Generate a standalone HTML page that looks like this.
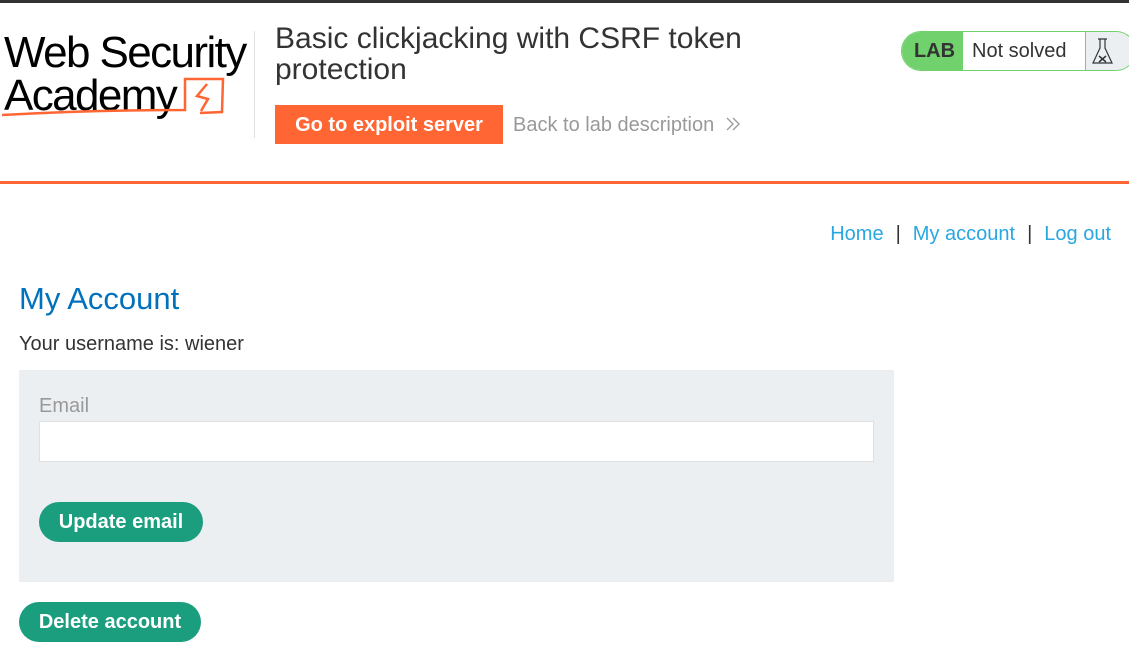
<!DOCTYPE html>
<html><head><meta charset="utf-8"><style>
*{margin:0;padding:0;box-sizing:border-box}
body{width:1129px;height:654px;overflow:hidden;background:#fff;font-family:"Liberation Sans",Arial,sans-serif;position:relative}
.top{position:absolute;left:0;top:0;width:1129px;height:3px;background:#333}
.hdr{position:absolute;left:0;top:181px;width:1129px;height:3px;background:#ff6633}
.logo{position:absolute;left:4px;top:31px;font-size:44px;line-height:43px;letter-spacing:-1.6px;color:#000}
.sep{position:absolute;left:254px;top:31px;width:1px;height:107px;background:#e0e0e0}
h2.t{position:absolute;left:275px;top:23px;font-size:30px;font-weight:normal;line-height:31px;color:#333;width:580px}
.btn{position:absolute;left:275px;top:105px;width:228px;height:39px;background:#ff6633;color:#fff;font-weight:bold;font-size:20px;text-align:center;line-height:40px}
.back{position:absolute;left:513px;top:114px;font-size:20px;color:#999}
.badge{position:absolute;left:901px;top:31px;width:235px;height:40px;border:1px solid #70d16d;border-radius:20px;overflow:hidden;display:flex}
.lab{width:61px;background:#70d16d;font-weight:bold;font-size:20px;color:#333;text-align:center;line-height:39px;padding-left:4px}
.ns{width:123px;font-size:20px;color:#333;padding-left:9px;line-height:39px;border-right:1px solid #70d16d}
.fl{flex:1;background:#ebeff2}
.nav{position:absolute;right:18px;top:223px;font-size:20px;color:#29a7e0}
.nav span{color:#333;margin:0 12px}
h1{position:absolute;left:19px;top:281px;font-size:31px;font-weight:normal;color:#0071bc}
.u{position:absolute;left:19px;top:333px;font-size:20px;color:#333}
.box{position:absolute;left:19px;top:370px;width:875px;height:212px;background:#ebeff2}
.lbl{position:absolute;left:39px;top:395px;font-size:20px;color:#999}
.inp{position:absolute;left:39px;top:421px;width:835px;height:41px;background:#fff;border:1px solid #e0e0e0}
.g{position:absolute;height:40px;border-radius:20px;background:#1a9e7e;color:#fff;font-weight:bold;font-size:20px;text-align:center;line-height:41px}
</style></head><body>
<div class="top"></div>
<div class="logo">Web Security<br>Academy</div>
<svg style="position:absolute;left:0;top:70px" width="230" height="50"><path d="M2 45 Q90 40 185 40 L185 9 L223 9 L222 42 L200 43" fill="none" stroke="#ff6633" stroke-width="2.5"/><path d="M207 14 L197 26 L208 29 L201 41" fill="none" stroke="#ff6633" stroke-width="2.5"/></svg>
<div class="sep"></div>
<h2 class="t">Basic clickjacking with CSRF token protection</h2>
<div class="btn">Go to exploit server</div>
<div class="back">Back to lab description <svg width="14" height="14" viewBox="0 0 14 14" style="margin-left:6px"><path d="M1 1l6 6-6 6M7 1l6 6-6 6" fill="none" stroke="#999" stroke-width="1.3"/></svg></div>
<div class="badge"><div class="lab">LAB</div><div class="ns">Not solved</div><div class="fl"><svg width="40" height="38" viewBox="0 0 40 38"><path d="M12 7h9M14 7v9l-7 15h19l-7-15V7" fill="none" stroke="#333" stroke-width="1.2"/><path d="M13 24l7 6M20 24l-7 6" stroke="#333" stroke-width="1.5"/></svg></div></div>
<div class="hdr"></div>
<div class="nav">Home<span>|</span>My account<span>|</span>Log out</div>
<h1>My Account</h1>
<div class="u">Your username is: wiener</div>
<div class="box"></div>
<div class="lbl">Email</div>
<div class="inp"></div>
<div class="g" style="left:39px;top:502px;width:164px">Update email</div>
<div class="g" style="left:19px;top:602px;width:182px">Delete account</div>
</body></html>
